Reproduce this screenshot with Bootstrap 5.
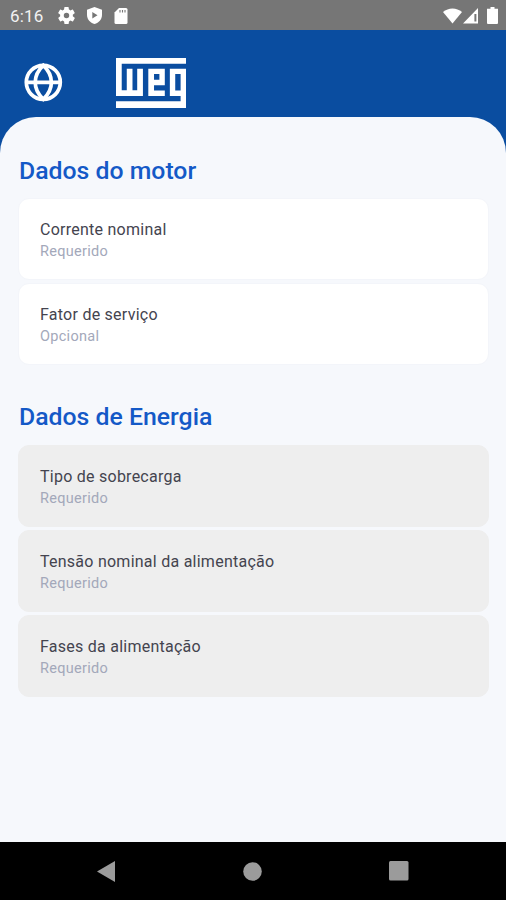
<!DOCTYPE html>
<html lang="pt-BR">
<head>
<meta charset="utf-8">
<meta name="viewport" content="width=device-width, initial-scale=1">
<title>WEG</title>
<link href="https://cdn.jsdelivr.net/npm/bootstrap@5.3.0/dist/css/bootstrap.min.css" rel="stylesheet">
<style>
body { font-family: Roboto, "Liberation Sans", sans-serif; background: #0a4da0; }
svg { display: block; flex: none; }
.screen { height: 900px; overflow: hidden; }
.status-bar { height: 30px; background: #767676; color: #fff; padding: 1px 7px 0 10px; }
.clock { font-size: 17px; line-height: 28px; letter-spacing: .2px; width: 48px; color: #f2f2f2; }
.app-bar { height: 87px; padding: 28px 24px 0; }
.app-bar .globe { margin-top: 5px; margin-right: 53px; }
.sheet { background: #f6f8fc; border-radius: 36px 36px 0 0; padding: 38px 18px 0; }
.section-title { font-size: 24.8px; line-height: 32px; font-weight: 500; color: #1459c7; margin: 0 0 11px 1px; }
.field-list { gap: 3.3px; }
.field-list + .section-title { margin-top: 36px; }
.field { height: 82px; border-radius: 11px; border: 1.5px solid #f3f5fa; padding: 20px 21px 0; margin-right: -1px; }
.field-off { background: #eeeeee; border-color: #eeeeee; }
.field-name { font-size: 16px; line-height: 22px; color: #44444f; letter-spacing: .25px; }
.field-note { font-size: 14.500px; line-height: 21px; color: #a3a8ba; letter-spacing: .3px; }
.list-off { padding-top: .4px; }
.nav-keys { height: 58px; background: #000; padding: 0 97px 0 97px; }
</style>
</head>
<body>
<div class="screen d-flex flex-column">
  <div class="status-bar d-flex align-items-center">
    <span class="clock">6:16</span>
    <svg width="17" height="17" viewBox="2 2 20 20" fill="#fff"><path fill-rule="evenodd" d="M19.4 13a7.700 7.700 0 0 0 0-2l2.100-1.650a.5.5 0 0 0 .12-.64l-2-3.460a.5.5 0 0 0-.6-.22l-2.500 1a7.300 7.300 0 0 0-1.700-1L14.450 2.400A.5.5 0 0 0 14 2h-4a.5.5 0 0 0-.5.4l-.37 2.650a7.300 7.300 0 0 0-1.700 1l-2.500-1a.5.5 0 0 0-.6.22l-2 3.460a.5.5 0 0 0 .12.640L4.600 11a7.700 7.700 0 0 0 0 2l-2.100 1.650a.5.5 0 0 0-.12.640l2 3.460a.5.5 0 0 0 .6.220l2.500-1a7.300 7.300 0 0 0 1.700 1l.37 2.650a.5.5 0 0 0 .5.400h4a.5.5 0 0 0 .5-.4l.37-2.650a7.300 7.300 0 0 0 1.700-1l2.500 1a.5.5 0 0 0 .6-.22l2-3.460a.5.5 0 0 0-.12-.64zM12 15.200a3.200 3.200 0 1 1 0-6.400 3.200 3.200 0 0 1 0 6.400z"/></svg>
    <svg class="ms-2 ps-1" width="19" height="17" viewBox="0 0 15 17"><path fill="#fff" d="M7.500 0 15 2.800V8c0 4.400-3.200 7.700-7.500 9C3.200 15.700 0 12.400 0 8V2.800z"/><path fill="#767676" d="M5.300 5v6.400l5.200-3.200z"/></svg>
    <svg class="ms-2 ps-1" width="18" height="16" viewBox="0 0 13 16"><path fill="#fff" d="M4.500 0H11.500A1.500 1.500 0 0 1 13 1.500V14.500A1.500 1.500 0 0 1 11.500 16H1.500A1.500 1.500 0 0 1 0 14.500V4.500z"/><path stroke="#767676" stroke-width="1.100" d="M5.500 2v2.500M8 2v2.500M10.500 2v2.500"/></svg>
    <svg class="ms-auto" width="19" height="16" viewBox="0 0 19 16"><path fill="#fff" d="M0 4C5.400-.8 13.600-.8 19 4L9.500 15.500z"/></svg>
    <svg width="17" height="16" viewBox="0 0 17 16"><path fill="#fff" fill-rule="evenodd" d="M16 0v15.500H1zM12.400 6v7.500h2V6z"/></svg>
    <svg class="ms-2" width="12" height="17" viewBox="0 0 12 17"><path fill="#fff" d="M3.500 0h4v1.800H11V16a1 1 0 0 1-1 1H1a1 1 0 0 1-1-1V1.800h3.500z"/></svg>
  </div>

  <header class="app-bar d-flex align-items-start">
    <svg class="globe" width="39" height="39" viewBox="0 0 39 39" fill="none" stroke="#fff" stroke-width="3.700"><circle cx="19.300" cy="19.300" r="17"/><path d="M19.300 2.300C8.500 12.500 8.500 26.100 19.300 36.300C30.100 26.100 30.100 12.500 19.300 2.300ZM2 19.300h34.600"/></svg>
    <svg width="70" height="50" viewBox="348 55 208 149" preserveAspectRatio="none" role="img" aria-label="WEG"><path fill="#fff" fill-rule="evenodd" d="M348 55H556V72H365V151H380V87H397V151H411V87H428V168H348ZM444 87H493V136H461V152H493V168H444ZM461 103V120H477V103ZM508 87H556V204H348V184H540V168H508ZM524 103V152H540V103Z"/></svg>
  </header>

  <main class="sheet flex-grow-1">
    <h2 class="section-title">Dados do motor</h2>
    <div class="field-list d-flex flex-column">
      <div class="field bg-white"><div class="field-name">Corrente nominal</div><div class="field-note">Requerido</div></div>
      <div class="field bg-white"><div class="field-name">Fator de serviço</div><div class="field-note">Opcional</div></div>
    </div>
    <h2 class="section-title">Dados de Energia</h2>
    <div class="field-list list-off d-flex flex-column">
      <div class="field field-off"><div class="field-name">Tipo de sobrecarga</div><div class="field-note">Requerido</div></div>
      <div class="field field-off"><div class="field-name">Tensão nominal da alimentação</div><div class="field-note">Requerido</div></div>
      <div class="field field-off"><div class="field-name">Fases da alimentação</div><div class="field-note">Requerido</div></div>
    </div>
  </main>

  <nav class="nav-keys d-flex align-items-center justify-content-between">
    <svg width="18" height="21" viewBox="0 0 18 21"><path fill="#9b9b9b" d="M18 0v21L0 10.500z"/></svg>
    <svg width="19" height="19" viewBox="0 0 19 19"><circle fill="#9b9b9b" cx="9.500" cy="9.500" r="9.300"/></svg>
    <svg width="20" height="20" viewBox="0 0 20 20"><rect fill="#9b9b9b" width="19.500" height="19.500" rx="1.500"/></svg>
  </nav>
</div>
<script src="https://cdn.jsdelivr.net/npm/bootstrap@5.3.0/dist/js/bootstrap.bundle.min.js"></script>
</body>
</html>
